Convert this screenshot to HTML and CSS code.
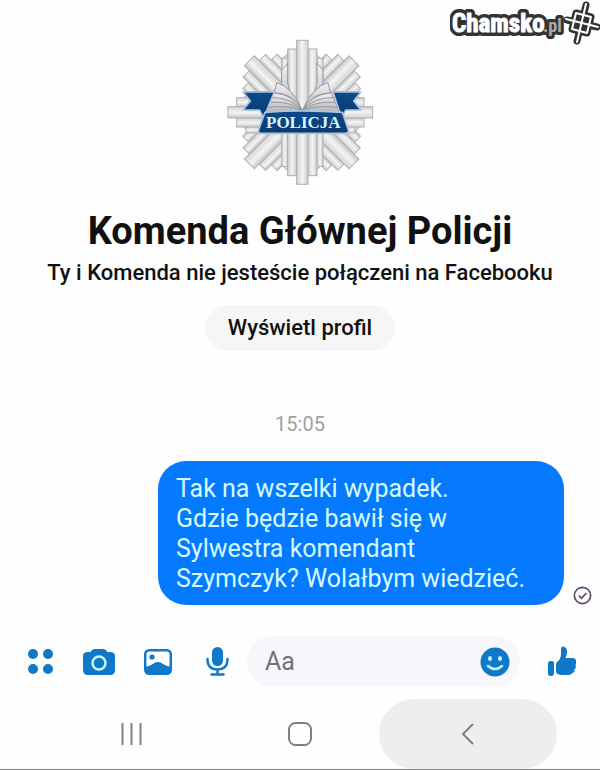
FILE: index.html
```html
<!DOCTYPE html>
<html lang="pl">

<head>
    <meta charset="UTF-8">
    <meta name="viewport" content="width=device-width, initial-scale=1.0">
    <title>Komenda Głównej Policji</title>
    <link rel="stylesheet" href="styles.css">
</head>

<body>
    <!-- watermark -->
    <svg class="watermark" width="150" height="46" viewBox="0 0 150 46" role="img" aria-label="Chamsko.pl">
        <defs>
            <text id="mark-name" x="2" y="32">Chamsko</text>
        </defs>
        <use class="mark-shadow" href="#mark-name"/>
        <text class="mark-domain" x="93" y="32">.pl</text>
        <use class="mark-name" href="#mark-name"/>
        <path class="mark-dark" d="M136 5L127 41M117 20L147 27M126 13L141 17L137 33L122 29Z"/>
        <path class="mark-light" d="M126 13L141 17L137 33L122 29Z"/>
        <path class="mark-light" d="M136 4L127 42M116 19L148 27"/>
    </svg>

    <main class="chat">
        <section class="profile">
            <svg class="avatar" viewBox="0 0 510 495" role="img" aria-label="Policja">
                <defs>
                    <linearGradient id="silver" x1="0" x2="1" y1="0" y2="0">
                        <stop offset="0" stop-color="#c6c6c9"/>
                        <stop offset=".45" stop-color="#f4f4f5"/>
                        <stop offset="1" stop-color="#d3d3d6"/>
                    </linearGradient>
                    <linearGradient id="page" x1="0" x2="0" y1="0" y2="1">
                        <stop offset="0" stop-color="#f2f2f3"/>
                        <stop offset="1" stop-color="#b4b4b8"/>
                    </linearGradient>
                    <linearGradient id="blue" x1="0" x2="0" y1="0" y2="1">
                        <stop offset="0" stop-color="#0c4a8c"/>
                        <stop offset="1" stop-color="#0a3a72"/>
                    </linearGradient>
                    <g id="arm">
                        <rect x="-62" y="-162" width="19" height="162"/>
                        <rect x="43" y="-162" width="19" height="162"/>
                        <rect x="-44" y="-190" width="27" height="190"/>
                        <rect x="17" y="-190" width="27" height="190"/>
                        <rect x="-17" y="-216" width="34" height="216"/>
                    </g>
                    <g id="corner">
                        <rect x="-92" y="-152" width="20" height="152"/>
                        <rect x="72" y="-152" width="20" height="152"/>
                        <rect x="-73" y="-174" width="25" height="174"/>
                        <rect x="48" y="-174" width="25" height="174"/>
                        <rect x="-48" y="-198" width="27" height="198"/>
                        <rect x="21" y="-198" width="27" height="198"/>
                        <rect x="-21" y="-219" width="42" height="219"/>
                    </g>
                </defs>
                <g class="star">
                    <use href="#corner" transform="translate(262 247) rotate(45)"/>
                    <use href="#corner" transform="translate(262 247) rotate(135)"/>
                    <use href="#corner" transform="translate(258 247) rotate(225)"/>
                    <use href="#corner" transform="translate(258 247) rotate(315)"/>
                    <use href="#arm" transform="translate(257 247) rotate(90)"/>
                    <use href="#arm" transform="translate(255 247) rotate(270)"/>
                    <use href="#arm" transform="translate(262 247) rotate(180)"/>
                    <use href="#arm" transform="translate(262 247)"/>
                </g>
                <!-- book -->
                <g class="pages">
                    <path d="M200 120V160Q215 205 262 242Q309 205 324 160V120L306 100V160Q298 200 262 242Q226 200 218 160V100Z"/>
                    <path d="M262 242Q240 195 176 188L152 248H262Z"/>
                    <path d="M262 242Q284 195 348 188L374 248H262Z"/>
                    <path d="M262 242Q232 170 185 158L178 188Q235 190 262 242Z"/>
                    <path d="M262 242Q292 170 339 158L346 188Q289 190 262 242Z"/>
                    <path class="page-lines" d="M262 242Q230 202 170 203M262 242Q224 212 164 217M262 242Q220 224 158 232"/>
                    <path class="page-lines" d="M262 242Q294 202 354 203M262 242Q300 212 360 217M262 242Q304 224 367 232"/>
                </g>
                <!-- ribbon -->
                <g class="ribbon">
                    <path d="M84 186H178L154 244L146 264L134 240H84L106 213Z"/>
                    <path d="M354 186H438L416 213L438 240H392L380 264Z"/>
                    <path d="M150 247Q262 238 382 247L401 304Q399 310 390 310H139Q129 310 130 302Z"/>
                </g>
                <text class="ribbon-text" x="265" y="295">POLICJA</text>
            </svg>
            <h1 class="name">Komenda Głównej Policji</h1>
            <p class="status">Ty i Komenda nie jesteście połączeni na Facebooku</p>
            <button class="view-profile" type="button">Wyświetl profil</button>
        </section>

        <section class="messages">
            <time class="time">15:05</time>
            <div class="message">
                <p class="bubble">Tak na wszelki wypadek.<br>Gdzie będzie bawił się w<br>Sylwestra komendant<br>Szymczyk? Wolałbym wiedzieć.</p>
                <svg class="sent" viewBox="0 0 18 18" role="img" aria-label="Wysłano">
                    <circle cx="9" cy="9" r="7.7"/>
                    <path d="M5.5 9.2L8 11.6L12.7 6.6"/>
                </svg>
            </div>
        </section>

        <form class="composer">
            <div class="tools">
                <button type="button" aria-label="Więcej">
                    <svg class="icon" viewBox="0 0 32 32">
                        <circle cx="9" cy="8" r="5"/>
                        <circle cx="24" cy="8" r="5"/>
                        <circle cx="9" cy="23" r="5"/>
                        <circle cx="24" cy="23" r="5"/>
                    </svg>
                </button>
                <button type="button" aria-label="Aparat">
                    <svg class="icon" viewBox="0 0 32 32">
                        <path d="M4 6H7.500Q9 3 11.500 3H20.500Q23 3 24.500 6H28Q32 6.500 32 10V24Q32 29 27 29H5Q0 29 0 24V10Q0 6.500 4 6Z"/>
                        <circle class="lens" cx="16" cy="17" r="6.500"/>
                    </svg>
                </button>
                <button type="button" aria-label="Galeria">
                    <svg class="icon" viewBox="0 0 32 32">
                        <rect class="line" x="3.200" y="4.200" width="25.600" height="23.600" rx="4"/>
                        <circle cx="10" cy="11" r="2.600"/>
                        <path d="M3 21Q7 20 10 18.500Q16 14 21 18Q24 20 29 21V25Q29 28 26 28H6Q3 28 3 25Z"/>
                    </svg>
                </button>
                <button type="button" aria-label="Mikrofon">
                    <svg class="icon" viewBox="0 0 32 32">
                        <rect x="11" y="1" width="11" height="19" rx="5.500"/>
                        <path class="line" d="M6.500 13V14Q7 23.500 16.500 23.500Q26 23.500 26.500 14V13M16.500 24V28M10.500 28.500H22.500"/>
                    </svg>
                </button>
            </div>
            <div class="field">
                <input class="text" type="text" placeholder="Aa" aria-label="Wiadomość">
                <button type="button" aria-label="Emotikony">
                    <svg class="icon" viewBox="0 0 32 32">
                        <circle cx="16" cy="16" r="14.500"/>
                        <ellipse class="white" cx="11" cy="12.500" rx="2" ry="2.600"/>
                        <ellipse class="white" cx="21" cy="12.500" rx="2" ry="2.600"/>
                        <path class="smile" d="M9 20Q16 26 23 20"/>
                    </svg>
                </button>
            </div>
            <button class="like" type="button" aria-label="Lubię to">
                <svg class="icon" viewBox="0 0 32 32">
                    <path d="M4.500 15H6Q8 15 8 17V27Q8 30 5 30H4Q2 30 2 27.500V17.500Q2 15 4.500 15Z"/>
                    <path d="M11 16Q15 13 15 8V3Q15 0.500 17 0.500Q21 1 21 6Q21 9 19.500 12H27Q30.500 12.500 30 16Q30.500 18 29.500 19Q30.500 22 28.500 23.500Q29 26 26.500 27Q25.500 29 22 29H16Q11 29 10 26V19Q10 17 11 16Z"/>
                </svg>
            </button>
        </form>
    </main>

    <nav class="system-nav">
        <button type="button" aria-label="Ostatnie">
            <svg class="nav-icon" viewBox="0 0 26 26"><path d="M3.500 2V24M12.500 2V24M21.500 2V24"/></svg>
        </button>
        <button type="button" aria-label="Ekran główny">
            <svg class="nav-icon" viewBox="0 0 26 26"><rect x="2" y="2" width="22" height="22" rx="6.500"/></svg>
        </button>
        <button class="pressed" type="button" aria-label="Wstecz">
            <svg class="nav-icon" viewBox="0 0 26 26"><path d="M18 3L8 13L18 23"/></svg>
        </button>
    </nav>
</body>

</html>
```

FILE: styles.css
```css
* {
    margin: 0;
    padding: 0;
    box-sizing: border-box;
}

body {
    position: relative;
    min-height: 100vh;
    display: flex;
    flex-direction: column;
    background-color: #fefefe;
    border-bottom: 1px solid #858585;
    font-family: Roboto, "Liberation Sans", sans-serif;
    color: #111;
}

button {
    border: 0;
    background: none;
    font: inherit;
    color: inherit;
    cursor: pointer;
}

svg {
    display: block;
}

/* watermark */
.watermark {
    position: absolute;
    top: 0;
    right: 0;
    font-family: "Liberation Sans Narrow", "Roboto Condensed", "Liberation Sans", sans-serif;
    font-size: 25px;
    font-weight: bold;
    stroke-linecap: round;
    stroke-linejoin: round;
}

.mark-shadow {
    stroke: #333;
    stroke-width: 8px;
}

.mark-name {
    fill: #fff;
    stroke: #fff;
    stroke-width: 1px;
}

.mark-domain {
    font-size: 18px;
    fill: #aaa;
    stroke: #333;
    stroke-width: 6px;
    paint-order: stroke;
}

.mark-dark {
    fill: #333;
    stroke: #333;
    stroke-width: 7px;
}

.mark-light {
    fill: none;
    stroke: #fff;
    stroke-width: 2px;
}

/* profile */
.chat {
    flex: 1;
}

.profile {
    display: flex;
    flex-direction: column;
    align-items: center;
    padding-top: 30px;
    text-align: center;
}

.avatar {
    width: 170px;
    height: 165px;
}

.star {
    fill: url(#silver);
    stroke: #b0b0b4;
    stroke-width: 3px;
}

.pages {
    fill: url(#page);
    stroke: #97979c;
    stroke-width: 3px;
}

.page-lines {
    fill: none;
}

.ribbon {
    fill: url(#blue);
    stroke: #a9c4dd;
    stroke-width: 5px;
    stroke-linejoin: round;
}

.ribbon-text {
    font-family: "Liberation Serif", serif;
    font-size: 51px;
    font-weight: bold;
    text-anchor: middle;
    fill: #d9f4fb;
}

.name {
    margin-top: 12px;
    font-size: 38px;
    line-height: 48px;
}

.status {
    margin-top: 4px;
    font-size: 22px;
    font-weight: 500;
    line-height: 28px;
}

.view-profile {
    margin-top: 18px;
    padding: 9px 23px;
    border-radius: 23px;
    background-color: #f6f6f6;
    font-size: 22px;
    font-weight: 500;
    line-height: 28px;
}

/* messages */
.messages {
    padding: 60px 8px 0 36px;
}

.time {
    display: block;
    margin-right: 28px;
    font-size: 20px;
    line-height: 26px;
    text-align: center;
    color: #a0a0a0;
}

.message {
    display: flex;
    justify-content: flex-end;
    align-items: flex-end;
    gap: 9px;
    margin-top: 24px;
}

.bubble {
    padding: 13px 39px 11px 18px;
    border-radius: 28px;
    background-color: #067aff;
    font-size: 25px;
    line-height: 30px;
    color: #d5fbff;
}

.sent {
    width: 19px;
    height: 19px;
    fill: none;
    stroke: #5e4870;
    stroke-width: 1.6px;
}

/* composer */
.composer {
    display: flex;
    align-items: center;
    padding: 31px 22px 0 24px;
}

.tools {
    display: flex;
    gap: 27px;
}

.icon {
    width: 32px;
    height: 32px;
    fill: #0f78c8;
}

.line {
    fill: none;
    stroke: #0f78c8;
    stroke-width: 2.5px;
    stroke-linecap: round;
}

.lens {
    fill: none;
    stroke: #c9f6ff;
    stroke-width: 2.5px;
}

.white {
    fill: #c9f6ff;
}

.smile {
    fill: none;
    stroke: #c9f6ff;
    stroke-width: 2.5px;
    stroke-linecap: round;
}

.field {
    flex: 1;
    min-width: 0;
    display: flex;
    align-items: center;
    margin: 0 26px 0 14px;
    padding: 0 9px 0 18px;
    border-radius: 26px;
    background-color: #f7f7fb;
}

.text {
    flex: 1;
    min-width: 0;
    height: 51px;
    border: 0;
    outline: 0;
    background: none;
    font: inherit;
    font-size: 25px;
}

.text::placeholder {
    color: #6f7378;
}

/* system navigation */
.system-nav {
    display: grid;
    grid-template-columns: repeat(3, 1fr);
    padding: 0 48px;
}

.system-nav button {
    display: flex;
    justify-content: center;
    align-items: center;
    height: 70px;
    margin: 0 -5px;
    border-radius: 35px;
}

.system-nav .pressed {
    background-color: #eee;
}

.nav-icon {
    width: 26px;
    height: 26px;
    fill: none;
    stroke: #808080;
    stroke-width: 2px;
}
```
